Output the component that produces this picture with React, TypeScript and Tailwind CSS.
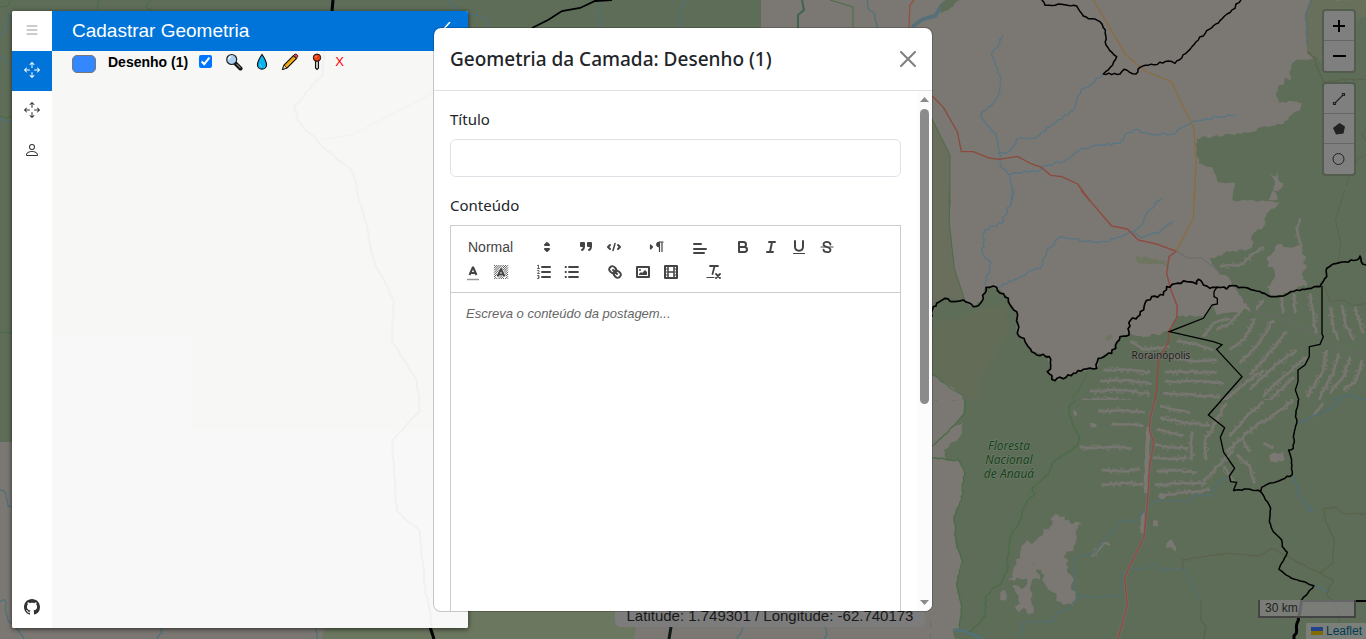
import React from "react";
import { BsArrowsMove, BsGithub, BsList, BsPerson } from "react-icons/bs";

type Pt = [number, number];

const parse = (s: string): Pt[] =>
  s.split(" ").map((p) => p.split(",").map(Number) as Pt);

/** Turns a coarse polyline into a natural-looking one by displacing midpoints. */
function rough(s: string, amp = 4, step = 9, closed = false): string {
  const pts = parse(s);
  if (closed) pts.push(pts[0]);
  let seed = Math.abs(Math.round(pts[0][0] * 31 + pts[0][1] * 17 + pts.length * 7)) + 11;
  const rnd = () => {
    seed = (seed * 16807) % 2147483647;
    return seed / 2147483647 - 0.5;
  };
  let d = `M${pts[0][0]} ${pts[0][1]}`;
  for (let i = 1; i < pts.length; i++) {
    const [ax, ay] = pts[i - 1];
    const [bx, by] = pts[i];
    const len = Math.hypot(bx - ax, by - ay) || 1;
    const n = Math.max(1, Math.round(len / step));
    for (let k = 1; k < n; k++) {
      const o = rnd() * 2 * amp;
      const t = k / n;
      d += `L${(ax + (bx - ax) * t - ((by - ay) / len) * o).toFixed(1)} ${(ay + (by - ay) * t + ((bx - ax) / len) * o).toFixed(1)}`;
    }
    d += `L${bx} ${by}`;
  }
  return closed ? d + "Z" : d;
}

const GREEN = "#5e6d58";
const GREY = "#7b7873";
const RIVER = "#597583";
const PARK = "#4a6c46";
const TRACK = "#5b634b";

function Land({ p, fill = GREEN, amp = 4 }: { p: string; fill?: string; amp?: number }) {
  return <path d={rough(p, amp, 9, true)} fill={fill} />;
}
function Line({ p, c = RIVER, w = 4, amp = 3, o = 1 }: { p: string; c?: string; w?: number; amp?: number; o?: number }) {
  return (
    <path d={rough(p, amp)} fill="none" stroke={c} strokeWidth={w} strokeLinejoin="round" opacity={o} />
  );
}
/** Cleared strips along the settlement roads. */
function Clearing({ p, w = 7 }: { p: string; w?: number }) {
  return (
    <g fill="none" stroke={GREY} strokeLinejoin="bevel" opacity=".9">
      <path d={rough(p, 3, 12)} strokeWidth={w} />
      <path d={rough(p, 11, 5)} strokeWidth="3" />
    </g>
  );
}

const CLEARINGS_MID = [
  "520,542 590,540 660,548", "510,575 580,570 665,582", "480,605 570,600 660,612", "455,632 540,625 650,645",
  "705,548 780,545 860,548", "705,575 790,572 880,580", "700,610 790,615 870,622", "700,640 780,645 850,655",
  "600,455 640,480 720,470", "720,500 800,515 860,510", "740,455 800,462 850,480", "820,440 850,400 900,385",
  "860,420 900,400 950,340", "900,480 940,450 975,385", "930,520 980,470 1030,390", "960,555 1010,500 1070,425",
  "960,600 1020,540 1100,480", "1000,620 1060,560 1130,500", "870,640 920,600 1000,540", "960,640 1020,630 1090,560",
  "1140,310 1150,370 1160,430", "1200,350 1210,410 1225,450", "1235,345 1245,400 1270,450", "1275,350 1290,400 1300,430",
  "1190,480 1180,540 1130,620", "1225,490 1210,550 1160,640", "1260,500 1240,560 1200,610", "1295,510 1280,570 1240,600",
  "1055,320 1060,370", "1090,310 1095,370", "1000,330 980,360", "1110,85 1100,120 1115,170", "870,230 930,225 1000,170",
];
const CLEARINGS_LOW = [
  "505,35 570,30 645,38", "545,75 600,73 640,78", "450,143 530,142 605,145", "515,212 570,214 630,208", "515,258 580,248 640,255",
  "690,20 740,30 780,40", "690,55 760,68 840,75", "680,90 730,100 760,105", "675,135 720,142 775,143", "670,175 720,178 770,175",
  "680,215 740,212 800,218", "675,255 760,248 830,250", "820,245 860,200 910,150", "690,290 740,280 840,270", "785,95 785,180",
  "830,180 825,120 890,10", "890,155 940,110 1000,60", "900,110 950,50 1000,5", "920,165 960,200 975,250", "880,200 920,250",
  "1000,70 1050,30 1090,0", "940,125 960,155", "1150,50 1180,10", "1000,130 1030,145", "485,470 520,430 540,435",
];

function BaseMap() {
  return (
    <svg
      className="absolute inset-0 h-full w-full"
      viewBox="0 0 1366 639"
      preserveAspectRatio="xMidYMid slice"
      aria-hidden="true"
    >
      <rect width="1366" height="639" fill={GREY} />
      <path d="M0 0H761V27L766 60H500V442H0Z" fill={GREEN} />
      <path d="M322 639L330 600H640L634 639Z" fill="#6b775e" />
      <g fill="none" stroke={PARK} strokeWidth="1">
        <path d="M0 7L8 6L10 0M98 10Q96 5 99 0M152 0L147 4L146 8L152 10M0 116L7 118L12 116M0 332L12 333" />
        <path d="M830 0L853 7V27M954 560L957 580L955 610L958 639" />
        <path d="M802 0L804 10L798 15L798 28" strokeWidth="2" stroke="#3f654c" />
      </g>
      <g fill="none" stroke="#52707a" strokeWidth="1.3">
        <path d={rough("10,11 8,22 4,32 0,35", 1, 3)} />
        <path d={rough("0,56 5,60 12,75", 1, 3)} />
        <path d={rough("0,120 12,122", 1, 3)} />
        <path d={rough("0,602 5,600 8,620 18,630 24,639", 1, 3)} />
        <path d={rough("0,490 6,493 8,506 12,507", 1, 3)} />
        <path d={rough("448,0 452,6 464,12 486,18 490,28", 1, 3)} />
        <path d={rough("600,0 598,14 602,28", 1, 3)} />
        <path d={rough("685,0 680,10 678,22 681,28", 1, 3)} />
        <path d={rough("867,0 868,8 875,15 877,28", 1, 3)} />
        <path d={rough("160,628 162,633 157,639", 1, 3)} />
        <path d={rough("315,628 317,639", 1, 3)} />
        <path d={rough("743,627 737,639", 1, 3)} />
        <path d={rough("825,627 827,634 824,639", 1, 3)} />
      </g>
      <path d="M333 0L332 11M430 627L434 639" stroke="#000" strokeWidth="3" fill="none" />
      <path d="M532 28L548 20L562 11L580 8L595 1L612 0" stroke="#000" strokeWidth="1.8" fill="none" />
      <path d="M671 627L669 639" stroke="#111a18" strokeWidth="3" />
      <path d="M914 0L910 5L909 28" fill="none" stroke="#94513f" strokeWidth="1.3" />
      <path d="M912 27L923 19L935 16L942 5L950 0" fill="none" stroke="#557078" strokeWidth="4" />

      <g transform="translate(930 0) scale(.33333)">
        <Land p="35,12 50,0 90,0 60,25 30,40" amp={3} />
        <path d="M0 340L60 465V620H0Z" fill="#696f5c" />
        <path d="M0 345L60 465V620" fill="none" stroke={PARK} strokeWidth="3" />
        <Land p="1140,0 1126,40 1132,160 1160,185 1320,250 1320,0" fill="#68705b" amp={2} />
        <Land p="1140,178 1095,182 1078,215 1080,243 1062,235 1060,255 1045,257 1038,280 1050,310 1085,303 1118,308 1112,325 1085,345 1060,372 990,382 970,395 905,403 800,415 801,450 806,490 850,508 862,545 915,548 907,600 1320,620 1320,45 1260,70 1180,190 1155,168" />
        <Land p="1040,510 1048,545 1060,550 1052,570 1085,583 1050,583 1040,600 1015,600 1030,570 1035,545 1022,522 1038,530" fill={GREY} amp={2} />
        <Line p="217,105 205,135 184,162 200,200 213,240 210,275 190,310 152,342 170,375 198,400 208,450 213,500 240,525 247,600" />
        <Line p="520,222 480,255 452,270 435,325 380,365 315,415 265,415 235,455 210,457" amp={4} />
        <Line p="915,345 860,350 820,360 785,365 730,403 660,402 615,388 590,400 570,430 490,437 440,455 400,485 340,497 325,515 280,515 240,525" amp={4} />
        <Line p="1145,0 1128,40 1132,130" c="#566e79" w={4} />
        <Line p="1132,155 1155,175 1165,210 1180,245 1230,240 1308,238" c={TRACK} amp={2} />
        <path d="M1308 395L1295 402L1308 425M1308 465L1285 475L1258 530L1238 600" fill="none" stroke={TRACK} strokeWidth="3" />
        <path d="M7 288L40 322L82 395L94 455H130L178 474L208 478L262 469L305 492L333 501L362 526L395 530L443 552L478 600" fill="none" stroke="#8c4a3c" strokeWidth="4" />
        <path d="M490 0L588 165L645 213L725 246L750 300L792 385L798 485L793 600" fill="none" stroke="#8a6d3f" strokeWidth="4" />
        <Line p="335,0 345,16 385,12 440,18 460,48 510,65 526,90 528,135 560,170 548,195 520,222 570,222 582,208 618,222 630,202 715,183 735,190 780,148 830,92 870,62 915,25 918,12 933,0" c="#000" w={4.5} amp={3} />
      </g>

      <g transform="translate(930 190) scale(.33333)">
        <path d="M0 0H60L58 100L73 235L104 330L0 380Z" fill="#696f5c" />
        <Land p="7,380 20,340 45,325 100,330 130,350 160,325 168,292 190,288 235,325 260,365 262,430 305,485 358,500 352,545 375,572 430,550 500,535 505,505 545,490 570,440 597,430 640,442 715,425 742,378 820,380 850,345 940,355 1000,370 1320,300 1320,670 0,670" amp={5} />
        <Land p="905,15 950,25 1000,5 1025,0 1320,-10 1320,640 1000,640 960,360 912,290 900,270 865,245 838,205 900,185 965,175 970,130 1000,110 1010,70 1050,35 1035,5 960,25" amp={5} />
        <Land p="1010,210 1035,170 1110,165 1125,210 1120,260 1130,290 1030,320 1010,290 1035,260" fill={GREY} amp={8} />
        <Land p="855,300 910,290 945,345 935,370 860,375 840,340" fill={GREY} amp={6} />
        <Land p="615,200 660,205 710,215 715,228 690,222 625,220" fill="#6e7560" />
        <Land p="525,442 545,432 548,442 530,452" fill="#6e7560" amp={2} />
        <Land p="100,380 160,355 225,345 235,420 200,500 165,540 150,635 60,605 10,550 7,400" fill="#636c57" amp={5} />
        <Land p="0,555 60,590 100,620 105,670 0,670" fill={GREY} amp={3} />
        <path d="M58 0V100L73 235L104 330M7 553L25 562L60 595L98 615L104 660M475 545L445 600L420 635L417 660" fill="none" stroke={PARK} strokeWidth="3" />
        {CLEARINGS_MID.map((p) => <Clearing key={p} p={p} />)}
        <Line p="250,0 245,30 215,100 165,118 155,185 182,215 165,285" amp={5} />
        <Line p="697,22 650,70 640,95 620,118 605,125 530,155 470,155 395,140 350,180 335,230 270,260 205,292" amp={4} />
        <Line p="728,93 690,125 635,142 607,125" amp={3} />
        <Line p="1308,630 1260,615 1200,635 1195,660" c="#4c6d78" />
        <path d="M1245 0L1216 90L1232 160L1225 215M1180 280L1200 335L1240 330L1270 347L1308 340" fill="none" stroke={TRACK} strokeWidth="3" />
        <path d="M738 184L775 204H815L865 243H895L912 260L913 290L968 365L1050 385L1145 425L1210 470L1308 500" fill="none" stroke="#6b6769" strokeWidth="3" />
        <path d="M452 0L545 108L592 117L625 150L680 162L738 184L717 200L710 250L723 300L742 350L740 383L716 425L715 455L685 515L680 600L668 660" fill="none" stroke="#8f4c40" strokeWidth="4.5" />
        <path d="M793 0L790 85L738 184" fill="none" stroke="#8a6d3f" strokeWidth="4" />
        <Line p="7,380 10,350 20,340 45,325 70,335 100,330 130,350 145,347 160,325 168,292 190,288 235,325 245,352 260,365 262,430 285,455 305,485 320,495 358,500 362,525 352,545 375,572 430,550 460,538 500,535 505,505 545,490 570,440 597,435 602,390 630,375 645,340 665,320 700,315 710,290 770,275 800,282 805,268 820,285 840,295 855,292 890,297 910,287" c="#000" w={5} amp={5} />
        <Line p="910,287 980,303 1030,320 1060,318 1100,300 1170,290 1190,260 1190,235 1220,220 1280,210 1290,198 1298,222 1308,225" c="#000" w={5} amp={3} />
        <path d="M862 290L852 305V320L862 325V342L846 345L820 385L718 425L850 455L876 464L860 478L936 560L848 660" fill="none" stroke="#000" strokeWidth="4" />
        <path d="M1176 288V432L1180 440L1170 463L1138 470V500L1125 525L1104 540V575L1096 600L1110 640L1103 660" fill="none" stroke="#000" strokeWidth="4" />
      </g>

      <g transform="translate(930 400) scale(.33333)">
        <rect y="0" width="1308" height="720" fill={GREEN} />
        <Land p="0,135 60,80 100,68 90,110 40,150 50,180 0,175" fill={GREY} amp={4} />
        <Land p="0,0 103,0 100,45 50,100 0,135" fill={GREY} amp={2} />
        <Land p="0,175 40,180 85,180 103,215 95,300 72,350 80,440 98,485 80,550 95,620 90,685 70,690 75,720 0,720" fill={GREY} amp={3} />
        <Land p="370,350 385,345 420,370 455,370 430,440 400,470 415,500 435,585 430,620 400,615 380,590 350,560 335,520 310,480 330,525 300,560 310,640 260,630 265,600 245,560 285,560 290,535 235,545 270,465 285,430 320,420 360,380" fill={GREY} amp={9} />
        <Land p="210,580 225,570 228,600 208,598" fill={GREY} amp={4} />
        <Land p="1018,165 1060,155 1065,178 1040,188 1022,185" fill={GREY} amp={4} />
        <Land p="670,360 684,362 683,380 669,378" fill={GREY} amp={1} />
        <Land p="710,430 725,418 738,440 735,455 722,440 712,445" fill={GREY} amp={3} />
        <Land p="430,30 442,38 440,48 430,45" fill={GREY} amp={1} />
        <Land p="480,68 500,73 498,82 482,82" fill={GREY} amp={1} />
        <Land p="632,350 645,330 642,400 630,400" fill={GREY} amp={2} />
        <Land p="690,278 710,285 700,298 685,292" fill={GREY} amp={2} />
        <g>{CLEARINGS_LOW.map((p) => <Clearing key={p} p={p} />)}</g>
        <Line p="655,80 650,200 648,280" c={GREY} w={12} amp={2} />
        <Line p="104,0 104,40 50,100 7,138" c={PARK} amp={2} />
        <Line p="7,175 85,180 103,215 95,300 72,350 80,440 98,485 80,550 95,620 90,685" c={PARK} amp={3} />
        <Line p="435,0 418,20 420,50 448,118 440,140 365,190 355,225 305,265 315,280 290,305 270,360 240,410 232,510 215,545 170,585 165,650 120,695 70,690" c={PARK} amp={3} w={4} />
        <Line p="895,235 865,245 845,290 800,285 770,305 690,300 655,318 620,365 575,358 530,410 490,460 435,475 430,560 445,590 420,625 380,640 370,665 280,665 270,717" c="#536f70" />
        <Line p="445,590 530,590 570,585 572,530 600,505 650,505 670,490 690,510 760,508 790,560 812,600" c="#536f70" />
        <Line p="1235,0 1200,25 1100,72" c="#4f6e77" />
        <Line p="1090,225 1110,290 1148,333 1130,330" c="#4f6e77" amp={2} />
        <Line p="70,690 110,695 160,717" c="#527279" w={8} />
        <Line p="760,508 757,480 820,470 900,460 985,468 1025,445 1210,542 1190,580 1230,640 1225,670" c={TRACK} amp={2} />
        <Line p="812,600 813,660 828,680 820,717" c={TRACK} amp={2} />
        <Line p="1308,342 1240,340 1220,322 1178,328 1190,370 1213,420 1208,490 1170,517" c={TRACK} amp={2} />
        <Line p="1150,557 1190,575" c="#527279" />
        <path d="M674 0L662 50L658 90L671 125L658 210L654 290L642 412L598 500L584 535L592 615L564 717" fill="none" stroke={GREY} strokeWidth="9" opacity=".5" />
        <path d="M674 0L662 50L658 90L671 125L658 210L654 290L642 412L598 500L584 535L592 615L564 717" fill="none" stroke="#8f4c45" strokeWidth="4.5" />
        <path d="M875 0L835 45L884 83L871 112L881 157L914 205L898 228L902 245L920 247L910 272" fill="none" stroke="#000" strokeWidth="4" />
        <Line p="910,272 960,268 992,275 995,262 1040,245 1087,223 1085,180 1076,150 1090,145 1090,110 1100,70 1098,40 1105,0" c="#000" w={4.5} amp={3} />
        <Line p="992,275 1012,305 1022,325 1018,365 1030,395 1055,420 1057,440 1072,457 1047,508 1060,518 1085,535 1152,557 1115,600" c="#000" w={4.5} amp={2} />
        <Line p="1115,600 1105,650 1100,690 1092,717" c="#000" w={9} amp={3} />
        <path d="M1115 603H1308" stroke="#000" strokeWidth="6" />
      </g>

      <g textAnchor="middle" className="font-['Noto_Sans',sans-serif]" strokeWidth="1" paintOrder="stroke">
        <text x="1161" y="359" fontSize="10" fill="#191c18" stroke={GREY}>Rorainópolis</text>
        <g fontSize="12" fontStyle="italic" fill="#17401c" stroke="#71806c">
          <text x="1009" y="450">Floresta</text>
          <text x="1009" y="464">Nacional</text>
          <text x="1009" y="478">de Anauá</text>
        </g>
      </g>
    </svg>
  );
}

function MapControls() {
  const btn = "flex h-[30px] w-[30px] items-center justify-center";
  const group =
    "flex flex-col overflow-hidden rounded border-2 border-[#525d4e] bg-[#7f7f7f] divide-y divide-[#666]";
  return (
    <div className="absolute top-[9px] right-[10px] flex flex-col gap-[9px]">
      <div className={group}>
        <button type="button" aria-label="Aumentar zoom" className={btn}>
          <svg width="14" height="14" stroke="#000" strokeWidth="2"><path d="M1 7H13M7 1V13" /></svg>
        </button>
        <button type="button" aria-label="Diminuir zoom" className={btn}>
          <svg width="14" height="14" stroke="#000" strokeWidth="2"><path d="M1 7H14" /></svg>
        </button>
      </div>
      <div className={group}>
        <button type="button" aria-label="Desenhar linha" className={btn}>
          <svg width="14" height="14" fill="none" stroke="#222" strokeWidth="1">
            <path d="M1.5 10.5h2v2h-2zM10.5 1.5h2v2h-2zM3.5 10.5L10.5 3.5" strokeWidth="1.2" />
          </svg>
        </button>
        <button type="button" aria-label="Desenhar polígono" className={btn}>
          <svg width="14" height="14" fill="#222"><path d="M7.5 1L13 4.5L11.5 11.5L4 12.5L1 6Z" /></svg>
        </button>
        <button type="button" aria-label="Desenhar círculo" className={btn}>
          <svg width="14" height="14" fill="none" stroke="#222"><circle cx="6.5" cy="7" r="5.5" /></svg>
        </button>
      </div>
    </div>
  );
}

function Sidebar() {
  const tab = "flex h-10 w-10 items-center justify-center pb-[2px]";
  return (
    <aside className="absolute top-[11px] bottom-[11px] left-3 flex w-[456px] overflow-hidden rounded-xs bg-[#f7f7f6] shadow-[0_1px_5px_rgba(0,0,0,0.65)]">
      <nav className="flex w-10 flex-col justify-between bg-white text-[#333]">
        <div>
          <button type="button" aria-label="Menu" className={`${tab} text-[#999]`}><BsList size={16} /></button>
          <button type="button" aria-label="Cadastrar geometria" className={`${tab} bg-[#0074d9] text-white`}><BsArrowsMove size={16} /></button>
          <button type="button" aria-label="Mover" className={tab}><BsArrowsMove size={16} /></button>
          <button type="button" aria-label="Usuário" className={tab}><BsPerson size={16} /></button>
        </div>
        <a href="#github" aria-label="GitHub" className={tab}><BsGithub size={16} /></a>
      </nav>
      <div className="relative flex-1">
        <svg className="absolute inset-0 h-full w-full" viewBox="0 0 416 617" preserveAspectRatio="xMinYMin slice" fill="none" aria-hidden="true">
          <path d="M0 327H140V418H416V617H0Z" fill="#f8f8f9" />
          <path d={rough("272,40 270,65 242,95 246,110 270,135 300,160 312,205 322,250 342,290 340,330 365,370 368,400 340,430 345,500 368,520 372,570 380,617", 1, 6)} stroke="#f1f1f1" strokeWidth="2" />
          <path d="M268 129L300 124L350 98L385 80" stroke="#f2f2f1" />
        </svg>
        <header className="relative flex h-10 items-center justify-between bg-[#0074d9] pr-4 pl-5 text-white">
          <h1 className="text-[19px] leading-10">Cadastrar Geometria</h1>
          <button type="button" aria-label="Fechar painel">
            <svg width="12" height="18" fill="none" stroke="#fff" strokeWidth="1.5"><path d="M10 0L2 9L10 18" /></svg>
          </button>
        </header>
        <div className="relative flex h-[22px] items-center pl-5 text-sm">
          <button type="button" aria-label="Cor da camada" className="mt-1 h-[18px] w-6 rounded-[5px] border border-[#777] bg-[#3388ff]" />
          <label htmlFor="layer" className="ml-3 font-bold text-black">Desenho (1)</label>
          <input id="layer" type="checkbox" defaultChecked className="mb-[2px] ml-[11px] h-[13px] w-[13px] accent-[#0075ff]" />
          <button type="button" aria-label="Localizar" className="ml-[13px]">
            <svg width="18" height="18" viewBox="0 0 18 18">
              <path d="M10.5 10.5L15.5 15.5" stroke="#111" strokeWidth="4" strokeLinecap="round" />
              <path d="M11.5 11L15.5 15" stroke="#777" strokeWidth="1.3" />
              <circle cx="6.7" cy="6.5" r="5" fill="#a9d0f2" stroke="#222" strokeWidth="1.2" />
              <path d="M3.5 6.500Q4 4 6 3.5" stroke="#fff" fill="none" strokeWidth="1.5" />
            </svg>
          </button>
          <button type="button" aria-label="Preenchimento" className="ml-[10px]">
            <svg width="18" height="18" viewBox="0 0 18 18">
              <path d="M9 1.500Q4.500 8 4.500 11.700A4.500 4.500 0 0 0 13.500 11.700Q13.500 8 9 1.500Z" fill="#0bb4f0" stroke="#111" strokeWidth="1.2" />
              <path d="M7 11Q7 13.500 9 14" stroke="#5cd0f8" fill="none" />
            </svg>
          </button>
          <button type="button" aria-label="Editar" className="ml-[10px]">
            <svg width="18" height="18" viewBox="0 0 18 18">
              <path d="M1.500 16.500L3 12L12.500 2.500L15.500 5.500L6 15Z" fill="#fcb714" stroke="#111" strokeWidth="1.1" />
              <path d="M12.500 2.500L14 1Q16 .8 17 3L15.500 5.500Z" fill="#e83c56" stroke="#111" strokeWidth=".8" />
              <path d="M1.500 16.500L3 12L6 15Z" fill="#eed0a8" stroke="#111" strokeWidth=".8" />
              <path d="M4.500 12.800L13 4.500" stroke="#e88a0c" />
            </svg>
          </button>
          <button type="button" aria-label="Marcador" className="ml-[10px]">
            <svg width="16" height="18" viewBox="0 0 16 18">
              <path d="M6.500 7.500H9.500V15L8 16.500L6.500 15Z" fill="#ccc" stroke="#111" strokeWidth="1.1" />
              <circle cx="8" cy="4.7" r="3.7" fill="#ee3d13" stroke="#111" strokeWidth="1" />
              <circle cx="7" cy="3.7" r=".9" fill="#ff8b68" />
            </svg>
          </button>
          <button type="button" aria-label="Excluir" className="ml-[10px] text-[13px] text-[#f00]">X</button>
        </div>
      </div>
    </aside>
  );
}

function Tool({ label, children }: { label: string; children: React.ReactNode }) {
  return (
    <button type="button" aria-label={label} className="flex h-6 w-7 items-center justify-center">
      <svg width="18" height="18" viewBox="0 0 18 18" fill="none" stroke="#444" strokeWidth="2" strokeLinecap="round" strokeLinejoin="round">
        {children}
      </svg>
    </button>
  );
}

function Tools({ children }: { children: React.ReactNode }) {
  return <div className="mr-[15px] flex h-[25px] items-center">{children}</div>;
}

const HATCH = Array.from({ length: 13 }, (_, i) => {
  const k = 5 + i * 2.2;
  return `M${Math.max(2, k - 16)} ${Math.min(16, k - 2)}L${Math.min(16, k - 2)} ${Math.max(2, k - 16)}`;
}).join("");

function EditorToolbar() {
  return (
    <div className="flex flex-wrap border border-[#ccc] p-2 text-[#444]">
      <Tools>
        <div className="relative flex w-[98px] items-center">
          <select aria-label="Formato" className="w-full appearance-none pl-[9px] text-sm" defaultValue="Normal">
            <option>Normal</option>
          </select>
          <svg className="pointer-events-none absolute right-px" width="18" height="18" viewBox="0 0 18 18" fill="#444" stroke="#444" strokeWidth="2" strokeLinejoin="round">
            <path d="M7 11L9 13L11 11ZM7 7L9 5L11 7Z" />
          </svg>
        </div>
      </Tools>
      <Tools>
        <Tool label="Citação">
          <g fill="#444"><rect x="4" y="5" width="3" height="3" /><rect x="11" y="5" width="3" height="3" /></g>
          <path d="M7 8C7 10.500 6.500 11.500 5 12M14 8C14 10.500 13.500 11.500 12 12" />
        </Tool>
        <Tool label="Código"><path d="M5 7L3 9L5 11M13 7L15 9L13 11" /><path d="M10 5.500L8 12.500" strokeWidth="1.5" /></Tool>
      </Tools>
      <Tools>
        <Tool label="Direção do texto">
          <path d="M2.500 11L4.500 9L2.500 7Z" fill="#444" strokeWidth="1.2" />
          <path d="M11 4A2.500 2.500 0 0 0 11 9Z" fill="#444" strokeWidth="1" />
          <path d="M11.500 4V14M14 4V14M11 4H15.500" strokeWidth="1.2" strokeLinecap="butt" />
        </Tool>
      </Tools>
      <Tools><Tool label="Alinhamento"><path d="M3 6H10M3 11H15M3 15H13" /></Tool></Tools>
      <Tools>
        <Tool label="Negrito"><path d="M5 4H9.500A2.500 2.500 0 0 1 9.500 9H5ZM5 9H10.500A2.500 2.500 0 0 1 10.500 14H5Z" /></Tool>
        <Tool label="Itálico"><path d="M7 4H13M5 14H11M8 14L10 4" /></Tool>
        <Tool label="Sublinhado"><path d="M5 3V9A4.012 4.012 0 0 0 13 9V3" /><path d="M3.500 15.500H14.500" strokeWidth="1" /></Tool>
        <Tool label="Tachado">
          <path d="M3 9H15" strokeWidth="1.2" />
          <path d="M12.500 6.500C12 3 5.500 3 5.500 6.200C5.500 8 7.500 8.600 9 9C11 9.500 12.500 10.200 12.500 12C12.500 15 5.800 15 5.500 11.700" strokeWidth="1.8" />
        </Tool>
      </Tools>
      <Tools>
        <Tool label="Cor do texto"><path d="M3 16.500H15" stroke="#999" strokeWidth="1.5" strokeLinecap="butt" /><path d="M5.500 12L9 4L12.500 12M7 10H11" strokeLinejoin="bevel" strokeLinecap="butt" /></Tool>
        <Tool label="Cor de fundo"><path d={HATCH} strokeWidth=".9" strokeLinecap="butt" /><path d="M5.500 13.500L9 6L12.500 13.500M7 11.500H11" stroke="#fff" strokeWidth="3" /><path d="M5.500 13.500L9 6L12.500 13.500M7 11.500H11" strokeLinecap="butt" /></Tool>
      </Tools>
      <Tools>
        <Tool label="Lista numerada">
          <path d="M7 4H15M7 9H15M7 14H15" />
          <path d="M2.500 2.500L3.500 2V5.500M2.500 5.500H4.500M2.500 7.500H4V8.500L2.500 10.500H4.500M2.500 12.500H4V14H3H4V15.500H2.500" strokeWidth=".8" />
        </Tool>
        <Tool label="Lista"><path d="M6 4H15M6 9H15M6 14H15M2.500 4H3M2.500 9H3M2.500 14H3" strokeWidth="1.8" /></Tool>
      </Tools>
      <Tools>
        <Tool label="Link">
          <path d="M7 7L11 11" />
          <path d="M8.900 4.577A3.476 3.476 0 0 1 9.360 9.360A3.476 3.476 0 0 1 4.577 8.900C3.185 7.500 2.035 6.400 4.217 4.217S7.500 3.185 8.900 4.577Z" />
          <path d="M13.423 9.100A3.476 3.476 0 0 0 8.640 8.640A3.476 3.476 0 0 0 9.100 13.423C10.500 14.815 11.600 15.965 13.783 13.783S14.815 10.500 13.423 9.100Z" />
        </Tool>
        <Tool label="Imagem"><rect x="3" y="4" width="12" height="10" /><circle cx="6" cy="7" r="1" fill="#444" stroke="none" /><path d="M5 12V11L7 9L8 10L11 7L13 9V12Z" fill="#444" stroke="none" /></Tool>
        <Tool label="Vídeo"><rect x="3" y="3" width="12" height="12" /><path d="M6 3V15M12 3V15M6 9H12" strokeWidth="1.5" /><path d="M4 6H6M4 9H6M4 12H6M12 6H14M12 9H14M12 12H14" strokeWidth="1" /></Tool>
      </Tools>
      <Tools>
        <Tool label="Limpar formatação">
          <path d="M5 3H13M7.500 11L9.500 3.500M11 11L15 15M15 11L11 15" strokeWidth="1.8" />
          <path d="M2 14.500H9" strokeWidth="1.2" />
        </Tool>
      </Tools>
    </div>
  );
}

function GeometryModal() {
  return (
    <div className="absolute inset-0 flex justify-center py-[27px]">
      <section
        role="dialog"
        aria-labelledby="modal-title"
        className="flex w-full max-w-[500px] flex-col overflow-hidden rounded-lg border border-black/20 bg-white bg-clip-padding font-['Noto_Sans',sans-serif] text-[#212529]"
      >
        <header className="flex h-[63px] shrink-0 items-center justify-between border-b border-[#dee2e6] px-4">
          <h2 id="modal-title" className="text-[19px] leading-[30px] font-medium">Geometria da Camada: Desenho (1)</h2>
          <button type="button" aria-label="Fechar">
            <svg width="16" height="16" viewBox="0 0 16 16" stroke="#7f7f7f" strokeWidth="2" strokeLinecap="round"><path d="M1 1L15 15M15 1L1 15" /></svg>
          </button>
        </header>
        <div className="flex min-h-0 flex-1">
          <form className="flex min-w-0 flex-1 flex-col overflow-hidden px-4 pt-4">
            <label htmlFor="title" className="mb-2 text-[15px] leading-6">Título</label>
            <input id="title" type="text" className="mb-4 h-[38px] w-full shrink-0 rounded-md border border-[#dee2e6] bg-white px-3" />
            <label htmlFor="content" className="mb-2 text-[15px] leading-6">Conteúdo</label>
            <div className="flex min-h-0 flex-1 flex-col font-['Liberation_Sans',Arial,sans-serif]">
              <EditorToolbar />
              <textarea
                id="content"
                placeholder="Escreva o conteúdo da postagem..."
                className="min-h-0 flex-1 resize-none border-x border-[#ccc] px-[15px] py-3 text-[13px] leading-[18px] placeholder:text-[#666] placeholder:italic"
              />
            </div>
          </form>
          <div className="flex w-[15px] flex-col items-center justify-between bg-[#fcfcfc] py-[6px]" aria-hidden="true">
            <svg width="9" height="5" fill="#8b8b8b"><path d="M0 5L4.500 0L9 5Z" /></svg>
            <div className="mt-[7px] mb-auto h-[58%] w-[9px] rounded-full bg-[#8b8b8b]" />
            <svg width="9" height="5" fill="#8b8b8b"><path d="M0 0L4.500 5L9 0Z" /></svg>
          </div>
        </div>
      </section>
    </div>
  );
}

export default function App() {
  return (
    <main className="relative h-screen overflow-hidden font-['Liberation_Sans',Arial,sans-serif]">
      <BaseMap />
      <MapControls />
      <div className="absolute right-[10px] bottom-[21px] w-[98px] border-2 border-t-0 border-[#444] bg-[#7f7f7f]/80 pl-[5px] text-xs leading-4 text-[#222]">30 km</div>
      <div className="absolute right-0 bottom-0 flex h-4 items-center gap-[3px] bg-[#7b7f79] pr-1 pl-[5px] text-xs leading-4">
        <svg width="12" height="8"><path d="M0 0H12V4H0Z" fill="#26418c" /><path d="M0 4H12V8H0Z" fill="#806c00" /></svg>
        <a href="#leaflet" className="text-[#003c54]">Leaflet</a>
      </div>
      <div className="absolute inset-x-0 bottom-3 flex justify-center">
        <p className="ml-[174px] rounded-md bg-[#7c7c7c] px-3 text-[15px] leading-[22px] text-[#191919]">Latitude: 1.749301 / Longitude: -62.740173</p>
      </div>
      <Sidebar />
      <GeometryModal />
    </main>
  );
}
